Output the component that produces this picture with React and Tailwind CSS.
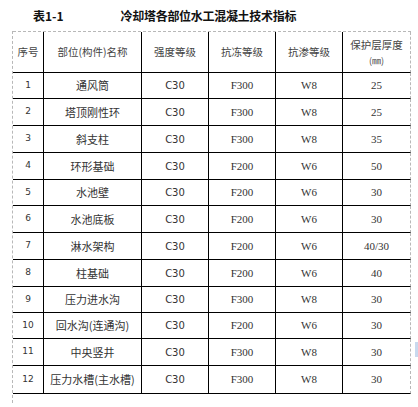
import React from "react";

const rows = [
  ["1", "通风筒", "C30", "F300", "W8", "25", "h-[26px]"],
  ["2", "塔顶刚性环", "C30", "F300", "W8", "25", "h-[27px]"],
  ["3", "斜支柱", "C30", "F300", "W8", "35", "h-[27px]"],
  ["4", "环形基础", "C30", "F200", "W6", "50", "h-[27px]"],
  ["5", "水池壁", "C30", "F200", "W6", "30", "h-[26px]"],
  ["6", "水池底板", "C30", "F200", "W6", "30", "h-[27px]"],
  ["7", "淋水架构", "C30", "F200", "W6", "40/30", "h-[27px]"],
  ["8", "柱基础", "C30", "F200", "W6", "40", "h-[27px]"],
  ["9", "压力进水沟", "C30", "F300", "W8", "30", "h-[26px]"],
  ["10", "回水沟(连通沟)", "C30", "F200", "W6", "30", "h-[26px]"],
  ["11", "中央竖井", "C30", "F300", "W8", "30", "h-[27px]"],
  ["12", "压力水槽(主水槽)", "C30", "F300", "W8", "30", "h-[28px]"],
];

const cjk = "font-['Noto_Sans_CJK_SC',sans-serif]";
const sans = "font-['DejaVu_Sans','Noto_Sans_CJK_SC',sans-serif]";
const serif = "font-['Liberation_Serif','Noto_Sans_CJK_SC',serif]";

export default function App() {
  return (
    <div className="relative w-[418px] h-[407px] bg-white overflow-hidden text-[#333]">
      <div className={`h-[31px] flex items-center font-bold text-[12px] text-[#111] ${cjk}`}>
        <span className="ml-[33px]">表1-1</span>
        <span className="ml-[57px] tracking-[-0.3px]">冷却塔各部位水工混凝土技术指标</span>
      </div>
      <div className="ml-[12px] w-[399px] border-l border-dashed border-[#b8b8b8] pb-[9px]">
        <div className="grid grid-cols-[31px_98px_67px_67px_67px_68px] border-t border-dashed border-[#b8b8b8]">
          <div className={`h-[41px] border-r border-b border-black flex items-center justify-center text-[10.5px] text-[#444] ${cjk}`}>序号</div>
          <div className={`h-[41px] border-r border-b border-black flex items-center justify-center text-[10.5px] text-[#444] ${cjk}`}>部位(构件)名称</div>
          <div className={`h-[41px] border-r border-b border-black flex items-center justify-center text-[10.5px] text-[#444] ${cjk}`}>强度等级</div>
          <div className={`h-[41px] border-r border-b border-black flex items-center justify-center text-[10.5px] text-[#444] ${cjk}`}>抗冻等级</div>
          <div className={`h-[41px] border-r border-b border-black flex items-center justify-center text-[10.5px] text-[#444] ${cjk}`}>抗渗等级</div>
          <div className={`h-[41px] border-b border-b-black border-r border-r-[#b8b8b8] border-dashed [border-bottom-style:solid] flex flex-col items-center justify-center text-[10.5px] leading-[16px] text-[#444] pt-[1px] ${cjk}`}>
            <span>保护层厚度</span>
            <span className="text-[9px]">(㎜)</span>
          </div>
          {rows.map((r) => (
            <React.Fragment key={r[0]}>
              <div className={`${r[6]} border-r border-b border-black flex items-center justify-center text-[9px] ${sans}`}>{r[0]}</div>
              <div className={`${r[6]} border-r border-b border-black flex items-center justify-center text-[11px] whitespace-nowrap ${cjk}`}>{r[1]}</div>
              <div className={`${r[6]} border-r border-b border-black flex items-center justify-center text-[10px] ${sans}`}>{r[2]}</div>
              <div className={`${r[6]} border-r border-b border-black flex items-center justify-center text-[11px] ${serif}`}>{r[3]}</div>
              <div className={`${r[6]} border-r border-b border-black flex items-center justify-center text-[11px] ${serif}`}>{r[4]}</div>
              <div className={`${r[6]} border-b border-b-black border-r border-r-[#b8b8b8] border-dashed [border-bottom-style:solid] flex items-center justify-center text-[11px] ${serif}`}>{r[5]}</div>
            </React.Fragment>
          ))}
        </div>
      </div>
      <div className="absolute left-[415px] top-[342px] w-[3px] h-[15px] bg-[#c9d9ee]" />
    </div>
  );
}
